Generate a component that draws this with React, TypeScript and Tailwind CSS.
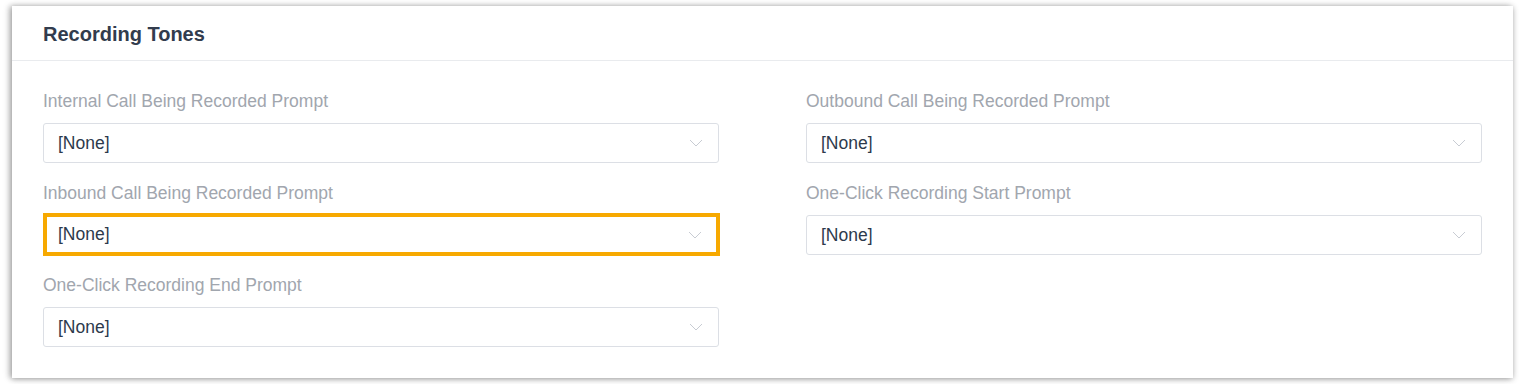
import React from 'react';

interface FieldProps {
    label: string;
    value?: string;
    highlighted?: boolean;
}

function Chevron() {
    return (
        <svg width="14" height="8" viewBox="0 0 14 8" className="shrink-0">
            <polyline points="1,1 7,7 13,1" fill="none" stroke="#c8ccd3" strokeWidth="1" />
        </svg>
    );
}

function Field({ label, value = '[None]', highlighted }: FieldProps) {
    return (
        <div className="flex flex-col">
            <div className="text-[17.5px] leading-[22px] text-[#a1a6ae] mb-[11px]">{label}</div>
            {highlighted ? (
                <div className="h-[43px] -mt-[2px] -mb-[1px] w-[677px] border-4 border-[#f7a900] flex items-center justify-between pl-[11px] pr-[14px] bg-white">
                    <span className="text-[17.5px] text-[#2d3a4c]">{value}</span>
                    <Chevron />
                </div>
            ) : (
                <div className="h-[40px] w-[676px] border border-[#dcdfe5] rounded-[3px] flex items-center justify-between pl-[14px] pr-[15px] bg-white">
                    <span className="text-[17.5px] text-[#2d3a4c]">{value}</span>
                    <Chevron />
                </div>
            )}
        </div>
    );
}

export default function App() {
    return (
        <div className="w-[1519px] h-[384px] bg-white pt-[6px] pl-[12px]" style={{ fontFamily: '"Liberation Sans", Arial, sans-serif' }}>
            <div className="w-[1501px] h-[372px] bg-white shadow-[-3px_0_6px_rgba(0,0,0,0.22),0_1px_6px_rgba(0,0,0,0.28)] flex flex-col">
                {/* Header */}
                <div className="h-[55px] border-b border-[#e9ebee] flex items-center pl-[31px]">
                    <h2 className="text-[20px] font-bold text-[#323c4d] pt-[2px]">Recording Tones</h2>
                </div>

                {/* Fields */}
                <div className="grid grid-cols-[676px_676px] gap-x-[87px] gap-y-[19px] pl-[31px] pt-[29px]">
                    <Field label="Internal Call Being Recorded Prompt" />
                    <Field label="Outbound Call Being Recorded Prompt" />
                    <Field label="Inbound Call Being Recorded Prompt" highlighted />
                    <Field label="One-Click Recording Start Prompt" />
                    <Field label="One-Click Recording End Prompt" />
                </div>
            </div>
        </div>
    );
}
